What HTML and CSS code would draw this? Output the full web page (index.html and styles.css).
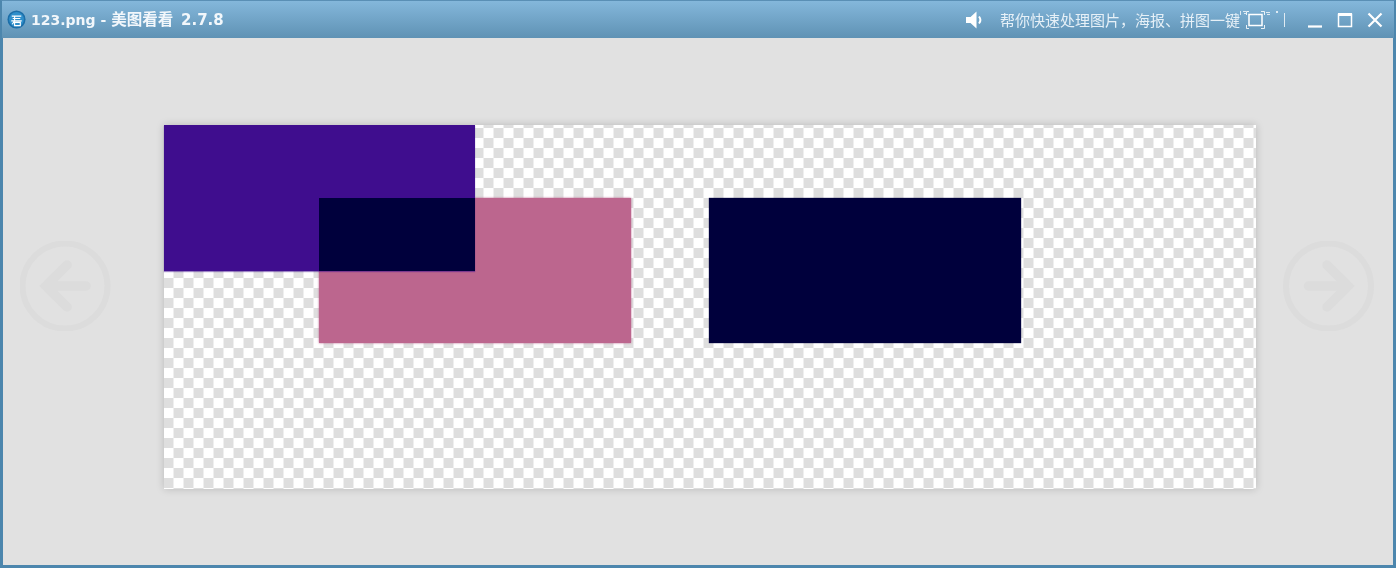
FILE: index.html
```html
<!DOCTYPE html>
<html lang="zh-CN">
<head>
  <meta charset="UTF-8" />
  <title>123.png - 美图看看 2.7.8</title>
  <link rel="stylesheet" href="styles.css">
</head>
<body>
  <div class="window">
    <div class="title-bar">
      <svg class="logo" width="19" height="19" viewBox="0 0 20 20">
        <circle cx="10" cy="10" r="9.5" fill="#1c6ea8" />
        <circle cx="10" cy="10" r="7.8" fill="#2f8fcb" />
        <path d="M5 6.500h10M6 9h8M4.500 11.500h11M8 6v5.500L5.500 15M8 13h6v3.500H8z" fill="none" stroke="#fff" stroke-width="1.200" />
      </svg>
      <span class="title-text">123.png - <span class="title-name">美图看看</span> <span class="title-ver">2.7.8</span></span>

      <div class="title-right">
        <svg class="speaker" width="18" height="18" viewBox="0 0 18 18">
          <path d="M0 6h4.500L10.500 0.500v17L4.500 12H0z" fill="#fff" />
          <path d="M13 5.500c1.600 2 1.600 5 0 7" fill="none" stroke="#fff" stroke-width="2" />
        </svg>
        <span class="notice">帮你快速处理图片，海报、拼图一键</span>
        <svg class="full-icon" width="38" height="20" viewBox="0 0 38 20">
          <!-- 滚动文字残影 -->
          <path d="M0 1h1v4H0zM3 1h3v1H3zM4 3h2v1H4zM26 2h4v1h-4zM27 4h3v1h-3zM36 1h2v2h-2z" fill="#fff" opacity=".75" />
          <path d="M6.500 5V1.500H9M21 1.500h3.500V5M6.500 15v3.500H9M24.500 15v3.500H21" fill="none" stroke="#fff" stroke-width="1" opacity=".85" />
          <rect x="9" y="4.500" width="13" height="11" fill="none" stroke="#fff" stroke-width="1.500" />
        </svg>
        <span class="sep"></span>
        <div class="win-btns">
          <svg width="16" height="16" viewBox="0 0 16 16"><path d="M1 14.500h14" stroke="#fff" stroke-width="2.200" /></svg>
          <svg width="16" height="16" viewBox="0 0 16 16"><path d="M1.500 2.500h13v12h-13z" fill="none" stroke="#fff" stroke-width="1.500" /><path d="M1 2.500h14" stroke="#fff" stroke-width="3" /></svg>
          <svg width="16" height="16" viewBox="0 0 16 16"><path d="M1.500 1.500l13 13M14.500 1.500l-13 13" stroke="#fff" stroke-width="2.200" /></svg>
        </div>
      </div>
    </div>

    <div class="stage">
      <svg class="nav-arrow" width="91" height="90" viewBox="0 0 91 90">
        <circle cx="45" cy="45" r="42.500" />
        <path d="M66 45H26M47 24L26 45l21 21" />
      </svg>

      <div class="picture">
        <div class="shape shape-pink"></div>
        <div class="shape shape-purple"></div>
        <div class="shape shape-overlap"></div>
        <div class="shape shape-navy"></div>
      </div>

      <svg class="nav-arrow" width="91" height="90" viewBox="0 0 91 90">
        <circle cx="45.500" cy="45" r="42.500" />
        <path d="M25.500 45H65M44 24l21 21-21 21" />
      </svg>
    </div>
  </div>
</body>
</html>
```

FILE: styles.css
```css
html, body {
  margin: 0;
  padding: 0;
  height: 100%;
  overflow: hidden;
}

.window {
  height: 568px;
  box-sizing: border-box;
  border: 3px solid #4c86ad;
  border-top: 1px solid #5a8fb5;
  display: flex;
  flex-direction: column;
  background: #e1e1e1;
}

.title-bar {
  height: 37px;
  flex-shrink: 0;
  margin: 0 -1px;
  padding: 0 11px 0 5px;
  display: flex;
  align-items: center;
  background: linear-gradient(#84b7db, #5f92b4);
  color: #fff;
  font-family: "DejaVu Sans", "Noto Sans CJK SC", sans-serif;
}

.logo {
  flex-shrink: 0;
  margin-bottom: 1px;
}

.title-text {
  margin-left: 5px;
  margin-bottom: 4px;
  font-size: 14px;
  font-weight: bold;
  color: #f2f7fb;
  filter: blur(0.3px);
}

.title-name {
  font-size: 15.500px;
}

.title-ver {
  margin-left: 3px;
  font-size: 15px;
}

.title-right {
  margin-left: auto;
  display: flex;
  align-items: center;
}

.speaker {
  margin-right: 16px;
}

.notice {
  width: 240px;
  white-space: nowrap;
  overflow: hidden;
  font-family: "Noto Sans CJK SC", sans-serif;
  font-size: 15px;
  color: #e6f0f7;
  filter: blur(0.3px);
}

.sep {
  width: 1px;
  height: 14px;
  margin-left: 6px;
  background: #dfeaf2;
}

.win-btns {
  display: flex;
  gap: 14px;
  margin-left: 22px;
}

.stage {
  flex: 1;
  display: grid;
  grid-template-columns: 90px 1146px 91px;
  align-items: start;
  padding: 87px 0 0 17px;
}

.nav-arrow {
  margin-top: 116px;
  fill: none;
  stroke: #dcdcdc;
  stroke-width: 6px;
}

.nav-arrow path {
  stroke-width: 9.500px;
  stroke-linecap: round;
  stroke-linejoin: miter;
}

.nav-arrow:last-child {
  margin-left: 27px;
}

.picture {
  position: relative;
  margin-left: 54px;
  width: 1092px;
  height: 364px;
  background: repeating-conic-gradient(#dedede 0 25%, #fff 0 50%) -0.5px 3px / 20px 20px;
  box-shadow: 0 0 8px rgba(0, 0, 0, 0.18);
}

.shape {
  position: absolute;
}

.shape-purple {
  left: 0;
  top: 0;
  width: 311px;
  height: 146px;
  background: #3f0d8e;
  box-shadow: 0 1px 1px rgba(63, 13, 142, 0.5);
}

.shape-pink {
  left: 155px;
  top: 73px;
  width: 312px;
  height: 145px;
  background: #bc668e;
  box-shadow: 0 0 2px #bc668e;
}

.shape-overlap {
  left: 155px;
  top: 73px;
  width: 156px;
  height: 73px;
  background: #00003c;
}

.shape-navy {
  left: 545px;
  top: 73px;
  width: 312px;
  height: 145px;
  background: #00003c;
  box-shadow: 0 0 1px #00003c;
}
```
